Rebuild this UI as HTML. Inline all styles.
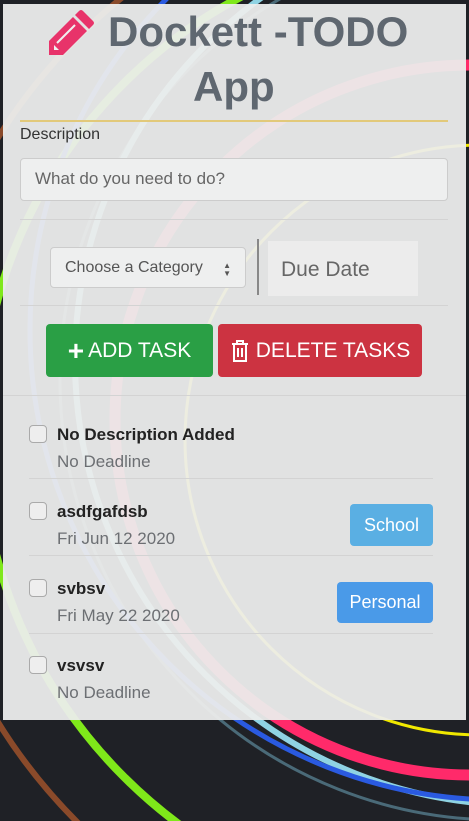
<!DOCTYPE html>
<html><head><meta charset="utf-8"><style>
*{box-sizing:border-box;margin:0;padding:0}
html,body{width:469px;height:821px;overflow:hidden}
body{background:#1f2126;font-family:"Liberation Sans",sans-serif;position:relative}
svg.bg{position:absolute;left:0;top:0}
.panel{position:absolute;left:3px;top:4px;width:463px;height:716px;background:rgba(236,237,236,0.95)}
.abs{position:absolute}
.title{color:#5f6770;font-size:42px;font-weight:bold;white-space:nowrap}
hr{position:absolute;border:0;height:1px;background:#d3d3d3}
.btn{position:absolute;color:#fff;font-size:21px;border-radius:4px;display:flex;align-items:center;justify-content:center}
.cb{position:absolute;left:29px;width:18px;height:18px;border:1.5px solid #aaa;border-radius:4px;background:#eee}
.t{position:absolute;left:57px;font-size:17px;font-weight:bold;color:#222}
.s{position:absolute;left:57px;font-size:17px;color:#6c6f73}
.badge{position:absolute;color:#fff;font-size:18px;border-radius:4px;display:flex;align-items:center;justify-content:center}
</style></head><body>
<svg class="bg" width="469" height="821">
<g fill="none">
<circle cx="470" cy="430" r="555" stroke="#8a4a2a" stroke-width="6"/>
<circle cx="470" cy="430" r="490" stroke="#7fe81a" stroke-width="8"/>
<circle cx="500" cy="380" r="440" stroke="#4a6a78" stroke-width="3"/>
<circle cx="520" cy="360" r="445" stroke="#8fd3e3" stroke-width="6"/>
<circle cx="470" cy="420" r="355" stroke="#ff2a6a" stroke-width="11"/>
<circle cx="480" cy="440" r="295" stroke="#f0e800" stroke-width="3"/>
<circle cx="500" cy="330" r="470" stroke="#2a5ae0" stroke-width="5"/>
</g>
</svg>
<div class="panel"></div>
<svg class="abs" style="left:49px;top:9px" width="46" height="46" viewBox="0 0 46 46">
<path d="M34 2 L44 12 Q46 14 44 16 L40 20 L26 6 L30 2 Q32 0 34 2Z" fill="#e8336a"/>
<path d="M24 8 L38 22 L14 46 L0 46 L0 32Z" fill="#e8336a"/>
<path d="M5 36 L5 41 L10 41 Z" fill="#f0f0f0"/>
<path d="M8 34 L26 16" stroke="#f0f0f0" stroke-width="2"/>
</svg>
<div class="abs title" style="left:108px;top:8px">Dockett -TODO</div>
<div class="abs title" style="left:193px;top:63px">App</div>
<div class="abs" style="left:20px;top:120px;width:428px;height:2px;background:#e2c97a"></div>
<div class="abs" style="left:20px;top:126px;font-size:16px;color:#333">Description</div>
<div class="abs" style="left:20px;top:158px;width:428px;height:43px;border:1px solid #ccc;border-radius:4px;background:#eeefef;font-size:17px;color:#666;padding:10px 14px">What do you need to do?</div>
<hr style="left:20px;top:219px;width:428px">
<div class="abs" style="left:50px;top:247px;width:196px;height:41px;border:1px solid #ccc;border-radius:4px;background:#eeefef;font-size:16px;color:#555;padding:11px 14px">Choose a Category <span style="font-size:8px;position:absolute;right:14px;top:13px">&#9650;</span><span style="font-size:8px;position:absolute;right:14px;top:21px">&#9660;</span></div>
<div class="abs" style="left:257px;top:239px;width:2px;height:56px;background:#888"></div>
<div class="abs" style="left:268px;top:241px;width:150px;height:55px;background:#ececec;font-size:21px;color:#666;padding:17px 13px">Due Date</div>
<hr style="left:20px;top:305px;width:428px">
<div class="btn" style="left:46px;top:324px;width:167px;height:53px;background:#2a9f45"><b style="font-size:28px;margin-right:4px">+</b>ADD TASK</div>
<div class="btn" style="left:218px;top:324px;width:204px;height:53px;background:#cc3341"><svg width="20" height="24" viewBox="0 0 20 24" style="margin-right:6px"><path d="M2 5H18M7 5V2H13V5M4 5V22H16V5M8 9V18M12 9V18" stroke="#fff" stroke-width="2" fill="none"/></svg>DELETE TASKS</div>
<hr style="left:3px;top:395px;width:463px">
<div class="cb" style="top:425px"></div><div class="t" style="top:425px">No Description Added</div><div class="s" style="top:452px">No Deadline</div>
<hr style="left:29px;top:478px;width:404px">
<div class="cb" style="top:502px"></div><div class="t" style="top:502px">asdfgafdsb</div><div class="s" style="top:529px">Fri Jun 12 2020</div>
<div class="badge" style="left:350px;top:504px;width:83px;height:42px;background:#5aafe3">School</div>
<hr style="left:29px;top:555px;width:404px">
<div class="cb" style="top:579px"></div><div class="t" style="top:579px">svbsv</div><div class="s" style="top:606px">Fri May 22 2020</div>
<div class="badge" style="left:337px;top:582px;width:96px;height:41px;background:#4a9ae8">Personal</div>
<hr style="left:29px;top:633px;width:404px">
<div class="cb" style="top:656px"></div><div class="t" style="top:656px">vsvsv</div><div class="s" style="top:683px">No Deadline</div>
</body></html>
